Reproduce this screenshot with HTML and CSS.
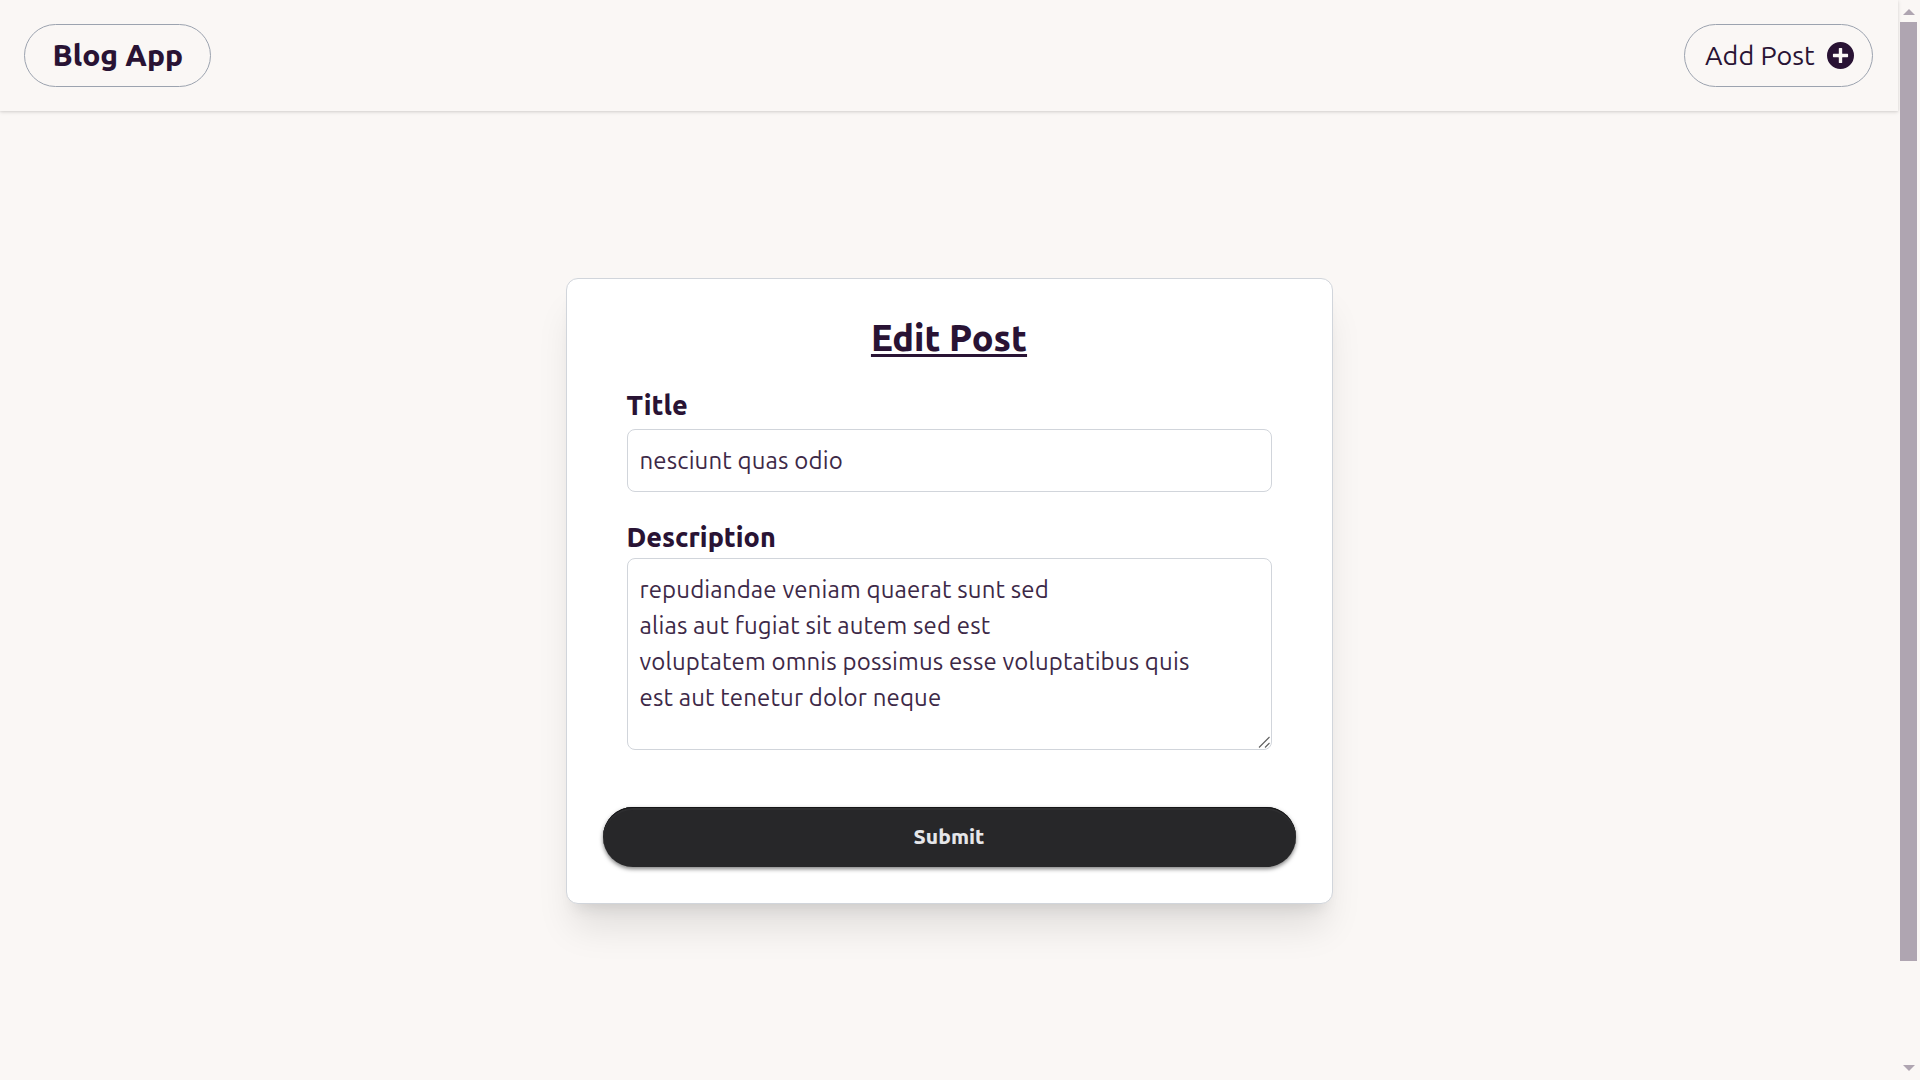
FILE: index.html
```html
<!DOCTYPE html>
<html lang="en">
<head>
<meta charset="utf-8">
<title>Blog App</title>
<link rel="stylesheet" href="styles.css">
</head>
<body>
<div class="page">
  <header class="nav">
    <a class="pill brand"><span>Blog App</span></a>
    <a class="pill add"><span class="add-text">Add Post</span>
      <svg class="plus" viewBox="0 0 512 512"><path fill="currentColor" d="M256 0a256 256 0 1 0 0 512a256 256 0 1 0 0-512zM400 276c0 7-5 12-12 12h-92c-4 0-8 4-8 8v92c0 7-5 12-12 12h-40c-7 0-12-5-12-12v-92c0-4-4-8-8-8h-92c-7 0-12-5-12-12v-40c0-7 5-12 12-12h92c4 0 8-4 8-8v-92c0-7 5-12 12-12h40c7 0 12 5 12 12v92c0 4 4 8 8 8h92c7 0 12 5 12 12z"/></svg>
    </a>
  </header>
  <main class="main">
    <form class="card">
      <h1 class="heading">Edit Post</h1>
      <div class="fields">
        <label class="label label-title" for="title">Title</label>
        <input class="control input" id="title" type="text" value="nesciunt quas odio">
        <label class="label label-desc" for="desc">Description</label>
        <div class="area-wrap">
          <textarea class="control area" id="desc">repudiandae veniam quaerat sunt sed
alias aut fugiat sit autem sed est
voluptatem omnis possimus esse voluptatibus quis
est aut tenetur dolor neque</textarea>
          <svg class="grip" viewBox="0 0 12 12"><path d="M1 11.5L11.5 1M7 11.5L11.5 7" fill="none" stroke="#606060" stroke-width="1.1"/></svg>
        </div>
      </div>
      <button class="submit" type="button">Submit</button>
    </form>
  </main>
</div>
<div class="scrollbar">
  <svg class="arrow" viewBox="0 0 12 6"><path d="M0 6L6 0L12 6z" fill="currentColor"/></svg>
  <div class="thumb"></div>
  <svg class="arrow arrow-down" viewBox="0 0 12 6"><path d="M0 0L6 6L12 0z" fill="currentColor"/></svg>
</div>
</body>
</html>
```
FILE: styles.css
```css
* { box-sizing: border-box; }
body {
  margin: 0;
  height: 1080px;
  display: flex;
  overflow: hidden;
  background: #faf7f5;
  color: #291334;
  font-family: Ubuntu, "Noto Sans", sans-serif;
}
.page { width: 1898px; display: flex; flex-direction: column; }
.nav {
  height: 111px;
  padding: 24px 25px 24px 24px;
  display: flex;
  justify-content: space-between;
  box-shadow: 0 1px 4px rgba(0, 0, 0, .12), 0 1px 2px rgba(0, 0, 0, .06);
}
.pill {
  height: 63px;
  border: 1px solid #9ca3af;
  border-radius: 32px;
  display: flex;
  align-items: center;
  white-space: nowrap;
}
.brand { width: 187px; padding: 0 0 2px 27.5px; font-size: 30px; font-weight: 800; }
.add { width: 189px; padding: 0 18px 0 20px; font-size: 27px; justify-content: space-between; }
.add-text { padding-bottom: 2px; letter-spacing: .05px; }
.plus { width: 27px; height: 27px; flex: none; }
.main { padding-top: 167px; display: flex; justify-content: center; }
.card {
  width: 767px;
  height: 626px;
  padding: 36px;
  display: flex;
  flex-direction: column;
  background: #fff;
  border: 1px solid #d1d5db;
  border-radius: 12px;
  box-shadow: 0 30px 37px -7px rgba(0, 0, 0, .1), 0 12px 15px -9px rgba(0, 0, 0, .1);
}
.heading {
  margin: 0;
  height: 48px;
  line-height: 45px;
  text-align: center;
  font-size: 36px;
  font-weight: 800;
  text-decoration: underline;
  text-decoration-thickness: 3px;
  text-underline-offset: 3px;
}
.fields { padding: 0 24px; display: flex; flex-direction: column; }
.label { font-weight: 800; font-size: 26.9px; line-height: 36px; height: 36px; white-space: nowrap; }
.label-title { margin: 24px 0 6px; }
.label-desc { margin: 27px 0 3px; }
.control {
  display: block;
  width: 100%;
  margin: 0;
  padding: 0 12px;
  border: 1px solid #d1d5db;
  border-radius: 8px;
  background: #fff;
  color: #3d2947;
  font: 24px/36px Ubuntu, "Noto Sans", sans-serif;
  letter-spacing: .15px;
  outline: 0;
}
.input { height: 63px; }
.area-wrap { position: relative; }
.area { height: 192px; padding-top: 13px; resize: none; overflow: hidden; white-space: pre; }
.grip { position: absolute; right: 2px; bottom: 2px; width: 12px; height: 12px; }
.submit {
  margin-top: auto;
  height: 60px;
  padding: 0 0 2px;
  border: 0;
  border-radius: 30px;
  background: #272729;
  color: #e5e6e9;
  font: 800 21px/58px Ubuntu, "Noto Sans", sans-serif;
  box-shadow: inset 0 1px 0 #151517, inset 0 3px 0 #2d2d2f, 0 2px 4px rgba(0, 0, 0, .5);
}
.scrollbar {
  width: 22px;
  padding: 9px 3px 9px 2px;
  display: flex;
  flex-direction: column;
  align-items: center;
  color: #afa5b1;
}
.arrow { width: 12px; height: 6px; flex: none; }
.thumb { width: 17px; height: 939px; margin-top: 7px; background: #afa5b1; }
.arrow-down { margin-top: auto; }
```
